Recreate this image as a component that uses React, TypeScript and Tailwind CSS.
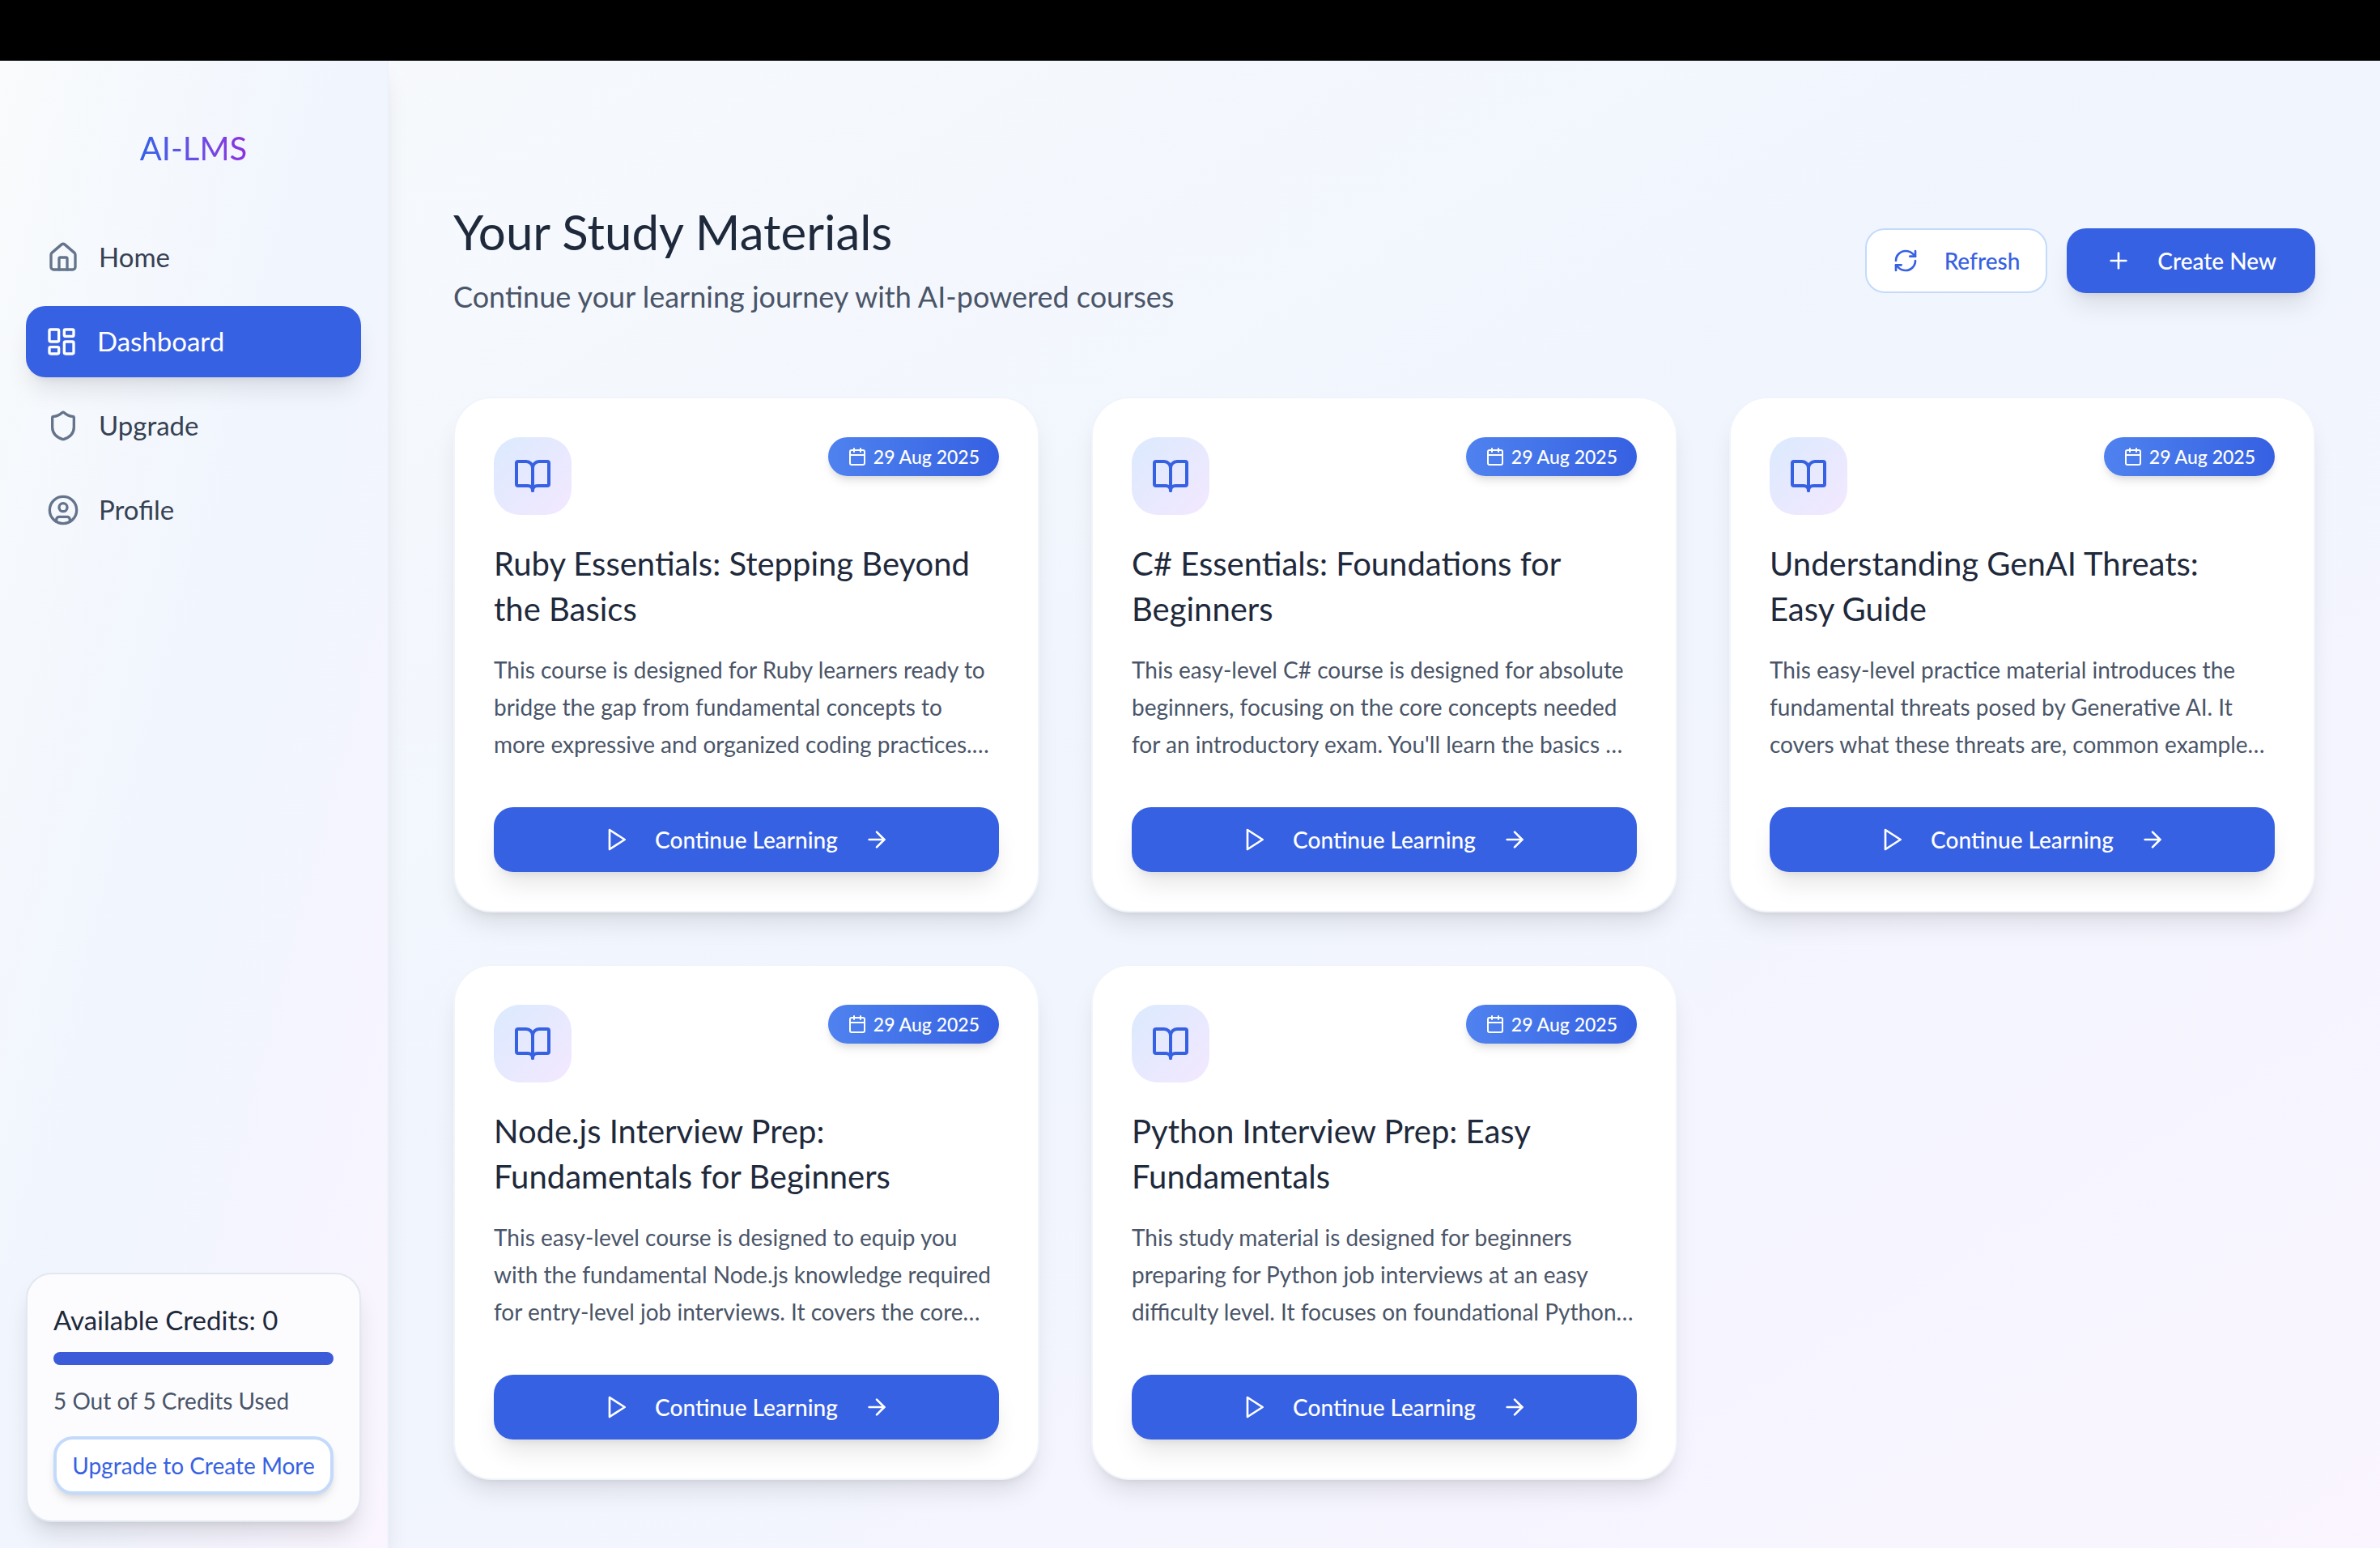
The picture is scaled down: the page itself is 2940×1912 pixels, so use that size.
import { ReactNode } from "react";
import {
  ArrowRight,
  BookOpen,
  Calendar,
  CircleUser,
  House,
  LayoutDashboard,
  Plus,
  RefreshCw,
  Shield,
} from "lucide-react";

type Course = { title: string[]; date: string; lines: string[] };

const courses: Course[] = [
  {
    title: ["Ruby Essentials: Stepping Beyond", "the Basics"],
    date: "29 Aug 2025",
    lines: [
      "This course is designed for Ruby learners ready to",
      "bridge the gap from fundamental concepts to",
      "more expressive and organized coding practices.…",
    ],
  },
  {
    title: ["C# Essentials: Foundations for", "Beginners"],
    date: "29 Aug 2025",
    lines: [
      "This easy-level C# course is designed for absolute",
      "beginners, focusing on the core concepts needed",
      "for an introductory exam. You'll learn the basics …",
    ],
  },
  {
    title: ["Understanding GenAI Threats:", "Easy Guide"],
    date: "29 Aug 2025",
    lines: [
      "This easy-level practice material introduces the",
      "fundamental threats posed by Generative AI. It",
      "covers what these threats are, common example…",
    ],
  },
  {
    title: ["Node.js Interview Prep:", "Fundamentals for Beginners"],
    date: "29 Aug 2025",
    lines: [
      "This easy-level course is designed to equip you",
      "with the fundamental Node.js knowledge required",
      "for entry-level job interviews. It covers the core…",
    ],
  },
  {
    title: ["Python Interview Prep: Easy", "Fundamentals"],
    date: "29 Aug 2025",
    lines: [
      "This study material is designed for beginners",
      "preparing for Python job interviews at an easy",
      "difficulty level. It focuses on foundational Python…",
    ],
  },
];

function PlayIcon() {
  return (
    <svg
      width="32"
      height="32"
      viewBox="0 0 24 24"
      fill="none"
      stroke="currentColor"
      strokeWidth="2"
      strokeLinecap="round"
      strokeLinejoin="round"
      aria-hidden="true"
    >
      <polygon points="6 3 20 12 6 21 6 3" />
    </svg>
  );
}

function Lines({ lines }: { lines: string[] }) {
  return lines.map((line) => (
    <span key={line} className="block whitespace-nowrap">
      {line}
    </span>
  ));
}

function NavItem({ icon, label, active = false }: { icon: ReactNode; label: string; active?: boolean }) {
  return (
    <a
      href="#"
      aria-current={active ? "page" : undefined}
      className={
        active
          ? "flex h-[88px] items-center gap-6 rounded-3xl bg-[#3761e3] px-6 text-[33px] text-white shadow-[0_20px_30px_-6px_rgba(0,0,0,0.1),0_8px_12px_-8px_rgba(0,0,0,0.1)]"
          : "flex h-[88px] items-center gap-6 rounded-3xl border-2 border-transparent px-6 text-[33px] text-[#364153] [&_svg]:text-[#64748b]"
      }
    >
      {icon}
      <span>{label}</span>
    </a>
  );
}

function Sidebar() {
  return (
    <aside className="flex w-[480px] shrink-0 flex-col border-r-2 border-[#eef3fc] bg-linear-to-br from-[#f9fbfc] via-[#f0f5fe] to-[#faf5ff] px-8 pt-[84px] pb-8 shadow-[0_20px_30px_-6px_rgba(0,0,0,0.1),0_8px_12px_-8px_rgba(0,0,0,0.1)]">
      <div className="flex justify-center">
        <span className="bg-linear-to-r from-[#2f62e8] to-[#8b2fe0] bg-clip-text text-[40px] leading-[48px] text-transparent">
          AI-LMS
        </span>
      </div>
      <nav className="mt-[67px] flex flex-col gap-4">
        <NavItem icon={<House size={40} />} label="Home" />
        <NavItem icon={<LayoutDashboard size={40} />} label="Dashboard" active />
        <NavItem icon={<Shield size={40} />} label="Upgrade" />
        <NavItem icon={<CircleUser size={40} />} label="Profile" />
      </nav>
      <section className="mt-auto flex flex-col rounded-4xl border-2 border-[#e2e8f0] bg-[#fcfcff] p-8 shadow-[0_20px_30px_-6px_rgba(0,0,0,0.13),0_8px_12px_-8px_rgba(0,0,0,0.1)]">
        <h2 className="text-[33px] leading-[48px] text-[#1e293b]">Available Credits: 0</h2>
        <div
          role="progressbar"
          aria-label="Credits used"
          aria-valuemin={0}
          aria-valuemax={5}
          aria-valuenow={5}
          className="mt-4 h-4 rounded-full bg-[#3b5bd9]"
        />
        <p className="mt-6 text-[28px] leading-10 text-[#4a5568]">5 Out of 5 Credits Used</p>
        <button
          type="button"
          className="mt-6 h-[72px] rounded-3xl border-4 border-[#c3dafb] bg-white text-[28px] whitespace-nowrap text-[#3761e3] shadow-[0_8px_12px_-2px_rgba(0,0,0,0.1),0_4px_8px_-4px_rgba(0,0,0,0.1)]"
        >
          Upgrade to Create More
        </button>
      </section>
    </aside>
  );
}

function CourseCard({ course }: { course: Course }) {
  return (
    <article className="flex flex-col rounded-[48px] border-2 border-[#f1f5fb] bg-white p-12 shadow-[0_20px_30px_-6px_rgba(0,0,0,0.1),0_8px_12px_-8px_rgba(0,0,0,0.1)]">
      <div className="flex items-start justify-between">
        <div className="flex size-24 items-center justify-center rounded-4xl bg-linear-to-br from-[#dbeafe] to-[#f3e8ff] text-[#3761e3]">
          <BookOpen size={48} />
        </div>
        <span className="flex h-12 items-center gap-2 rounded-full bg-linear-to-r from-[#4f82ef] to-[#3660e2] px-6 text-[23px] font-medium whitespace-nowrap text-white shadow-[0_8px_12px_-2px_rgba(0,0,0,0.1),0_4px_8px_-4px_rgba(0,0,0,0.1)]">
          <Calendar size={24} />
          {course.date}
        </span>
      </div>
      <h2 className="mt-8 text-[40px] leading-[56px] text-[#1e293b]">
        <Lines lines={course.title} />
      </h2>
      <p className="mt-6 text-[28px] leading-[46px] text-[#4a5568]">
        <Lines lines={course.lines} />
      </p>
      <button
        type="button"
        className="mt-[55px] flex h-20 items-center justify-center gap-8 rounded-3xl bg-[#3761e3] text-[28px] font-medium text-white shadow-[0_20px_30px_-6px_rgba(0,0,0,0.1),0_8px_12px_-8px_rgba(0,0,0,0.1)]"
      >
        <PlayIcon />
        Continue Learning
        <ArrowRight size={32} />
      </button>
    </article>
  );
}

export default function App() {
  return (
    <div className="flex min-h-screen flex-col font-[Lato,sans-serif]">
      <div className="h-[75px] bg-black" />
      <div className="flex grow bg-linear-to-br from-[#f8fafc] via-[#f0f5fe] to-[#faf5ff]">
        <Sidebar />
        <main className="min-w-0 grow px-20 pt-[175px] pb-[84px]">
          <header className="flex items-center justify-between">
            <div>
              <h1 className="text-[60px] leading-[72px] text-[#1e293b]">Your Study Materials</h1>
              <p className="mt-4 text-[36px] leading-[56px] text-[#4a5568]">
                Continue your learning journey with AI-powered courses
              </p>
            </div>
            <div className="flex gap-6">
              <button
                type="button"
                className="flex h-20 items-center gap-8 rounded-3xl border-2 border-[#c3dafb] bg-white px-8 text-[28px] font-medium text-[#3761e3]"
              >
                <RefreshCw size={32} />
                Refresh
              </button>
              <button
                type="button"
                className="flex h-20 items-center gap-8 rounded-3xl bg-[#3761e3] px-12 text-[28px] font-medium text-white shadow-[0_20px_30px_-6px_rgba(0,0,0,0.1),0_8px_12px_-8px_rgba(0,0,0,0.1)]"
              >
                <Plus size={32} />
                Create New
              </button>
            </div>
          </header>
          <div className="mt-24 grid grid-cols-3 gap-16">
            {courses.map((course) => (
              <CourseCard key={course.title[0]} course={course} />
            ))}
          </div>
        </main>
      </div>
    </div>
  );
}
